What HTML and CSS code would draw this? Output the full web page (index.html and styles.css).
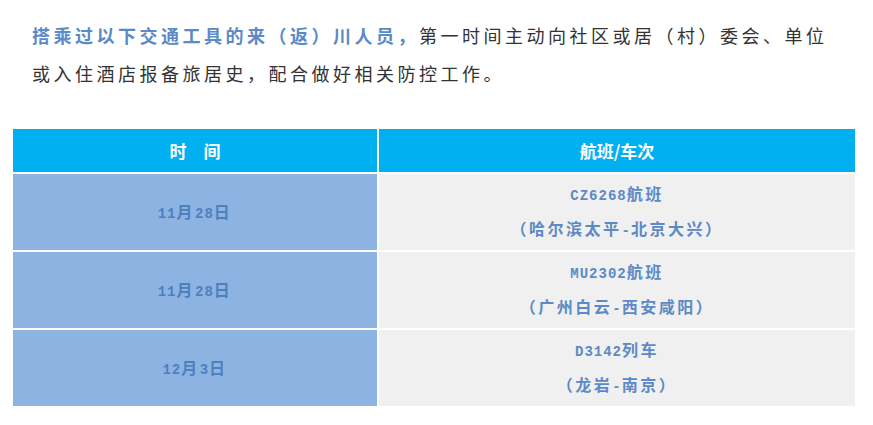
FILE: index.html
```html
<!DOCTYPE html>
<html lang="zh">
<head>
<meta charset="utf-8">
<link rel="stylesheet" href="styles.css">
</head>
<body>
<div class="page">
  <p class="intro"><strong class="hl">搭乘过以下交通工具的来（返）川人员，</strong>第一时间主动向社区或居（村）委会、单位或入住酒店报备旅居史，配合做好相关防控工作。</p>
  <table class="trips">
    <thead>
      <tr><th class="c-time">时　间</th><th class="c-no">航班/车次</th></tr>
    </thead>
    <tbody>
      <tr>
        <td class="c-time"><span class="lat">11</span>月<span class="lat">28</span>日</td>
        <td class="c-no"><div><span class="lat">CZ6268</span>航班</div><div>（哈尔滨太平<span class="lat">-</span>北京大兴）</div></td>
      </tr>
      <tr>
        <td class="c-time"><span class="lat">11</span>月<span class="lat">28</span>日</td>
        <td class="c-no"><div><span class="lat">MU2302</span>航班</div><div>（广州白云<span class="lat">-</span>西安咸阳）</div></td>
      </tr>
      <tr>
        <td class="c-time"><span class="lat">12</span>月<span class="lat">3</span>日</td>
        <td class="c-no"><div><span class="lat">D3142</span>列车</div><div>（龙岩<span class="lat">-</span>南京）</div></td>
      </tr>
    </tbody>
  </table>
</div>
</body>
</html>
```
FILE: styles.css
```css
html, body {
  margin: 0;
  padding: 0;
  background: #ffffff;
}
.page {
  padding: 16px 0 0 11px;
  font-family: "Noto Sans CJK SC", "Noto Sans", sans-serif;
}
.intro {
  margin: 0 0 35px 21px;
  width: 802px;
  font-size: 18px;
  line-height: 38px;
  letter-spacing: 3.5px;
  color: #333333;
}
.hl {
  color: #5b8ac7;
  font-weight: 700;
}
.trips {
  border-collapse: separate;
  border-spacing: 2px;
  width: 846px;
  table-layout: fixed;
}
.trips th {
  background: #00b0f0;
  color: #ffffff;
  height: 43px;
  padding: 0;
  font-size: 17px;
  font-weight: 700;
  text-align: center;
  vertical-align: middle;
}
.trips th.c-time { width: 364px; }
.trips td {
  height: 76px;
  padding: 0;
  text-align: center;
  vertical-align: middle;
  color: #5b8ac7;
  font-size: 16px;
  font-weight: 700;
  letter-spacing: 2.5px;
  line-height: 32px;
}
.trips td.c-time {
  background: #8db3e2;
  color: #4f7fbf;
}
.trips td.c-no {
  background: #f0f0f0;
}
.lat {
  font-family: "Liberation Mono", monospace;
  font-size: 14px;
  letter-spacing: 1px;
}
```
